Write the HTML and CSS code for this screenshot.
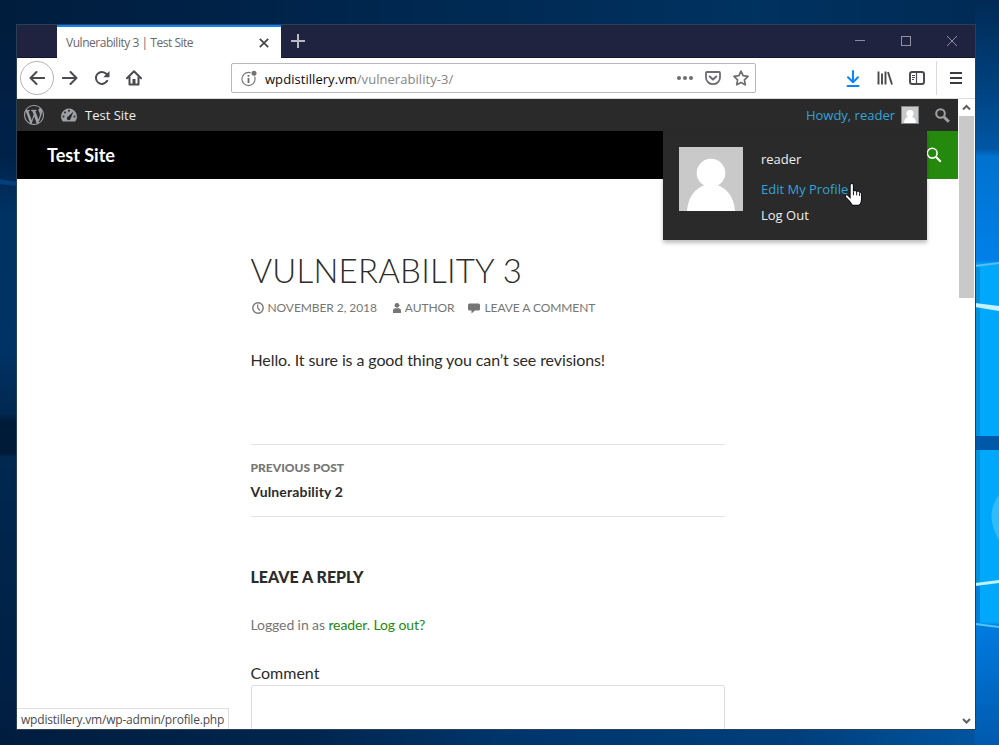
FILE: index.html
```html
<!DOCTYPE html>
<html lang="en">
<head>
<meta charset="utf-8">
<title>Vulnerability 3 | Test Site</title>
<link rel="stylesheet" href="styles.css">
</head>
<body>
<svg class="wallpaper" viewBox="0 0 999 745" preserveAspectRatio="none" aria-hidden="true">
  <defs>
    <linearGradient id="base" x1="0" x2="1" y1="0" y2="0"><stop offset="0" stop-color="#001d3d"/><stop offset=".3" stop-color="#00244b"/><stop offset=".75" stop-color="#003260"/><stop offset="1" stop-color="#002a54"/></linearGradient>
    <linearGradient id="left" x1="0" x2="0" y1="0" y2="1"><stop offset="0" stop-color="#001d3d"/><stop offset=".18" stop-color="#002249"/><stop offset=".26" stop-color="#003264"/><stop offset=".45" stop-color="#003365"/><stop offset=".54" stop-color="#002850"/><stop offset=".55" stop-color="#001b38"/><stop offset=".595" stop-color="#001b38"/><stop offset=".6" stop-color="#002850"/><stop offset="1" stop-color="#001e41"/></linearGradient>
    <linearGradient id="right" x1="0" x2="0" y1="0" y2="1"><stop offset="0" stop-color="#002a54"/><stop offset=".1" stop-color="#003e78"/><stop offset=".2" stop-color="#0057a5"/><stop offset=".21" stop-color="#0072cf"/><stop offset=".35" stop-color="#0080e8"/><stop offset=".355" stop-color="#00a8fb"/><stop offset=".835" stop-color="#00a8fb"/><stop offset=".84" stop-color="#007be0"/><stop offset="1" stop-color="#005aad"/></linearGradient>
    <linearGradient id="foot" x1="0" x2="1" y1="0" y2="0"><stop offset="0" stop-color="#001d3f"/><stop offset=".3" stop-color="#00254d"/><stop offset=".5" stop-color="#00356b"/><stop offset=".8" stop-color="#003f7c"/><stop offset="1" stop-color="#0058a5"/></linearGradient>
  </defs>
  <rect width="999" height="745" fill="url(#base)"/>
  <rect y="25" width="17" height="720" fill="url(#left)"/>
  <path d="M0 179L17 182V186L0 184Z" fill="#00407d"/>
  <rect y="729" width="999" height="16" fill="url(#foot)"/>
  <rect x="975" width="24" height="745" fill="url(#right)"/>
  <path d="M975 265L999 262V264L975 267Z" fill="#59bcf5"/>
  <rect x="975" y="267" width="5" height="316" fill="#0092dc"/>
  <path d="M975 303L999 306V311L975 307Z" fill="#c4f2ff"/>
  <rect x="975" y="436" width="24" height="14" fill="#0058a8"/>
  <path d="M999 495Q984 515 999 540Z" fill="#2fbcff"/>
  <path d="M975 583L999 580V583L975 586Z" fill="#bff2ff"/>
  <path d="M975 623L999 626V628L975 625Z" fill="#50c4fa"/>
  <path d="M975 586h5v37h-5z" fill="#0080d8"/>
</svg>

<div class="window">
  <header class="titlebar">
    <div class="tab">
      <span>Vulnerability 3 | Test Site</span>
      <svg width="10" height="10" viewBox="0 0 10 10"><path d="M.8.8l8.400 8.400M9.200.8L.8 9.200" stroke="#4a4a4f" stroke-width="1.800" fill="none"/></svg>
    </div>
    <svg class="newtab" width="14" height="14" viewBox="0 0 14 14"><path d="M7 0v14M0 7h14" stroke="#b9b9c6" stroke-width="2"/></svg>
    <div class="controls">
      <svg width="10" height="10" viewBox="0 0 10 10"><path d="M0 4.500h10" stroke="#8b8c9b"/></svg>
      <svg width="10" height="10" viewBox="0 0 10 10"><rect x=".5" y=".5" width="9" height="9" fill="none" stroke="#9192a0"/></svg>
      <svg width="10" height="10" viewBox="0 0 10 10"><path d="M0 0l10 10M10 0L0 10" stroke="#9192a0"/></svg>
    </div>
  </header>

  <div class="toolbar">
    <div class="nav">
      <span class="back"><svg width="16" height="16" viewBox="0 0 16 16"><path d="M15.200 8H1.500M7.500 2L1.500 8l6 6" fill="none" stroke="#4a4a4f" stroke-width="2" stroke-linecap="round" stroke-linejoin="round"/></svg></span>
      <svg width="16" height="16" viewBox="0 0 16 16"><path d="M.8 8h13.700M8.500 2l6 6-6 6" fill="none" stroke="#4a4a4f" stroke-width="2" stroke-linecap="round" stroke-linejoin="round"/></svg>
      <svg width="16" height="16" viewBox="0 0 16 16"><path d="M13.200 10.800A6 6 0 1 1 12.500 4" fill="none" stroke="#4a4a4f" stroke-width="2" stroke-linecap="round"/><path d="M15.500 1v6.200H9.300z" fill="#4a4a4f"/></svg>
      <svg width="16" height="16" viewBox="0 0 16 16"><path d="M1 8.200L8 1.300l7 6.900M3.500 7v7.500h9V7" fill="none" stroke="#4a4a4f" stroke-width="2" stroke-linecap="round" stroke-linejoin="round"/><path d="M6.500 9h3v6h-3z" fill="#4a4a4f"/></svg>
    </div>
    <div class="urlbar">
      <svg class="info" width="17" height="17" viewBox="0 0 17 17"><circle cx="7.500" cy="9" r="6.600" fill="none" stroke="#77777b" stroke-width="1.100"/><path d="M7.500 8v5M7.500 5v1.800" stroke="#6c6c70" stroke-width="1.800"/><circle cx="13" cy="3.200" r="3.400" fill="#fff"/><circle cx="13" cy="3.200" r="2.500" fill="#737377"/></svg>
      <span class="url">wpdistillery.vm<i>/vulnerability-3/</i></span>
      <svg width="16" height="16" viewBox="0 0 16 16"><g fill="#6d6d71"><circle cx="2" cy="8" r="2"/><circle cx="8" cy="8" r="2"/><circle cx="14" cy="8" r="2"/></g></svg>
      <svg width="16" height="16" viewBox="0 0 16 16"><path d="M2 2h12a1 1 0 0 1 1 1v4.500a7 6.700 0 0 1-14 0V3a1 1 0 0 1 1-1z" fill="none" stroke="#6d6d71" stroke-width="1.800"/><path d="M4.700 6.500L8 9.600l3.300-3.100" fill="none" stroke="#6d6d71" stroke-width="2" stroke-linecap="round" stroke-linejoin="round"/></svg>
      <svg width="16" height="16" viewBox="0 0 16 16"><path d="M8 1.200l2.100 4.500 4.900.7-3.600 3.400.9 5L8 12.400l-4.300 2.400.9-5L1 6.400l4.900-.7z" fill="none" stroke="#6d6d71" stroke-width="1.700" stroke-linejoin="round"/></svg>
    </div>
    <div class="tools">
      <svg width="14" height="17" viewBox="0 0 14 17"><path d="M7 1v11M2 7.300l5 5 5-5M1.500 16h11" fill="none" stroke="#0a84ff" stroke-width="2" stroke-linecap="round" stroke-linejoin="round"/></svg>
      <svg width="16" height="16" viewBox="0 0 16 16"><path d="M1.500 1.500v13M5 3.500v11M8.500 1.500v13" stroke="#4a4a4f" stroke-width="1.900"/><path d="M11 2l4 12.500" stroke="#4a4a4f" stroke-width="1.900"/></svg>
      <svg width="16" height="16" viewBox="0 0 16 16"><rect x="1" y="2" width="14" height="12" rx="2.200" fill="none" stroke="#4a4a4f" stroke-width="2"/><path d="M7.500 2v12" stroke="#4a4a4f" stroke-width="1.200"/><path d="M3 5.500h3M3 7.500h3M3 9.500h2" stroke="#4a4a4f"/></svg>
      <span class="divider"></span>
      <svg width="12" height="12" viewBox="0 0 12 12"><path d="M0 1h12M0 6h12M0 11h12" stroke="#3c3c40" stroke-width="2"/></svg>
    </div>
  </div>

  <div class="viewport">
    <div class="page">
      <div class="adminbar">
        <svg class="wp" width="20" height="20" viewBox="0 0 20 20"><path fill="#9da1a5" d="M20 10c0-5.510-4.490-10-10-10C4.480 0 0 4.490 0 10c0 5.520 4.480 10 10 10 5.510 0 10-4.480 10-10zM7.780 15.370L4.370 6.220c.55-.02 1.170-.08 1.170-.08.5-.06.44-1.130-.06-1.110 0 0-1.450.11-2.370.11-.18 0-.37 0-.58-.01C4.120 2.690 6.870 1.110 10 1.110c2.330 0 4.450.87 6.050 2.340-.68-.11-1.650.39-1.650 1.580 0 .74.45 1.360.9 2.100.35.61.55 1.360.55 2.460 0 1.490-1.400 5-1.400 5l-3.030-8.370c.54-.02.82-.17.82-.17.5-.05.44-1.250-.06-1.220 0 0-1.440.12-2.380.12-.87 0-2.330-.12-2.330-.12-.5-.03-.56 1.200-.06 1.220l.92.080 1.260 3.410zM17.410 10c.24-.64.74-1.870.43-4.250.7 1.290 1.050 2.710 1.050 4.250 0 3.290-1.730 6.240-4.400 7.780.97-2.590 1.940-5.200 2.920-7.780zM6.100 18.090C3.120 16.650 1.110 13.530 1.110 10c0-1.300.23-2.480.72-3.590C3.250 10.300 4.670 14.200 6.100 18.090zm4.030-6.630l2.580 6.980c-.86.29-1.760.45-2.710.45-.79 0-1.570-.11-2.290-.33.81-2.380 1.620-4.740 2.420-7.100z"/></svg>
        <svg class="dash" width="16" height="14" viewBox="0 0 16 14"><path d="M1.760 13.500h12.480A8 8 0 1 0 1.760 13.500z" fill="#9da1a5"/><g fill="#2a2a2a"><circle cx="8" cy="2.700" r="1"/><circle cx="4" cy="4.500" r="1"/><circle cx="2.500" cy="8.500" r="1"/><circle cx="13.500" cy="8.500" r="1"/><path d="M12.500 3.500L9.700 10.500a1.900 1.900 0 1 1-2.500-2z"/></g></svg>
        <span class="name">Test Site</span>
        <span class="howdy">Howdy, reader</span>
        <svg class="mini" viewBox="0 0 64 64"><rect width="64" height="64" fill="#c9c9c9"/><circle cx="32" cy="26" r="14.500" fill="#fff"/><path d="M8 64c1-16 10-26 24-26s23 10 24 26z" fill="#fff"/></svg>
        <svg class="find" width="15" height="15" viewBox="0 0 15 15"><circle cx="5.500" cy="5.500" r="4.300" fill="none" stroke="#9da1a5" stroke-width="2"/><path d="M9 9l4.800 4.800" stroke="#9da1a5" stroke-width="3"/></svg>
      </div>
      <div class="siteheader">
        <b>Test Site</b>
        <span class="toggle"><svg width="16" height="16" viewBox="0 0 16 16"><circle cx="6.200" cy="6.200" r="4.900" fill="none" stroke="#fff" stroke-width="1.600"/><path d="M9.800 9.800l5 5" stroke="#fff" stroke-width="2"/></svg></span>
      </div>

      <main>
        <h1>Vulnerability 3</h1>
        <div class="meta">
          <svg width="12" height="12" viewBox="0 0 12 12"><circle cx="6" cy="6" r="5.200" fill="none" stroke="#767676" stroke-width="1.400"/><path d="M5.700 2.500V6l2.300 2.500" fill="none" stroke="#767676" stroke-width="1.200"/></svg>
          <span class="date">November 2, 2018</span>
          <svg width="8" height="12" viewBox="0 0 8 12"><circle cx="4" cy="3.300" r="2.400" fill="#767676"/><path d="M0 11V9q0-2.700 2.500-2.700h3Q8 6.300 8 9v2z" fill="#767676"/></svg>
          <span class="author">author</span>
          <svg width="12" height="12" viewBox="0 0 12 12"><path d="M1.500 1.500h9Q12 1.500 12 3v4q0 1.500-1.500 1.500H7L3.500 11.500v-3h-2Q0 8.500 0 7V3q0-1.500 1.500-1.500z" fill="#767676"/></svg>
          <span class="reply">Leave a comment</span>
        </div>
        <p class="body">Hello. It sure is a good thing you can’t see revisions!</p>
        <nav class="postnav">
          <div class="label">Previous Post</div>
          <div class="prev">Vulnerability 2</div>
        </nav>
        <h3>Leave a Reply</h3>
        <p class="logged">Logged in as <a>reader</a>. <a>Log out?</a></p>
        <label>Comment</label>
        <div class="textarea"></div>
      </main>
    </div>
    <div class="scrollbar">
      <svg width="17" height="17" viewBox="0 0 17 17"><path d="M5 10.500L8.500 7l3.500 3.500" fill="none" stroke="#606060" stroke-width="2"/></svg>
      <div class="thumb"></div>
      <svg class="down" width="17" height="17" viewBox="0 0 17 17"><path d="M5 7l3.500 3.500L12 7" fill="none" stroke="#606060" stroke-width="2"/></svg>
    </div>
    <div class="usermenu">
      <svg width="64" height="64" viewBox="0 0 64 64"><rect width="64" height="64" fill="#c9c9c9"/><circle cx="32" cy="26" r="14.300" fill="#fff"/><path d="M8 64C9 49 17 41 26 38h12c9 3 17 11 18 26z" fill="#fff"/></svg>
      <div class="links"><span>reader</span><span class="hover">Edit My Profile</span><span>Log Out</span></div>
    </div>
    <div class="status">wpdistillery.vm/wp-admin/profile.php</div>
  </div>
</div>

<svg class="cursor" width="18" height="24" viewBox="0 0 16.2 21.600"><path d="M5.500 14V3q0-1.800 1.500-1.800T8.500 3v5.500q.2-1 1.400-1t1.500 1.300q.3-.8 1.300-.7t1.400 1.300q.3-.5 .8-.3 .9.3.9 1.900v5q0 3-2.300 5H7.500Q6 17.800 1.800 14q-1.300-1.400-.3-2.200 1-.7 2.300.4z" fill="#fff" stroke="#10131f" stroke-width="1"/><path d="M8.500 8.500V12M11.400 9.200V12M14 10.200V12.500" stroke="#10131f" stroke-width=".9"/></svg>
</body>
</html>
```
FILE: styles.css
```css
* { box-sizing: border-box; }
body {
  margin: 0;
  width: 999px;
  height: 745px;
  padding: 24px 23px 15px 16px;
  overflow: hidden;
  position: relative;
  background: #002249;
  font-family: "Open Sans", "Noto Sans", sans-serif;
}
svg { display: block; flex: none; }
h1, h3, p { margin: 0; }
.wallpaper { position: absolute; inset: 0; width: 999px; height: 745px; }
.window {
  position: relative;
  width: 960px;
  height: 706px;
  border: 1px solid #2b4053;
  display: flex;
  flex-direction: column;
  background: #fff;
}

.titlebar {
  height: 33px;
  flex: none;
  display: flex;
  align-items: center;
  background: #202340;
  border-bottom: 1px solid #14152e;
  padding-left: 40px;
}
.tab {
  width: 224px;
  height: 33px;
  margin-top: 1px;
  border-top: 2px solid #0a84ff;
  background: #fff;
  padding: 0 12px 0 9px;
  display: flex;
  align-items: center;
  justify-content: space-between;
  font-size: 12px;
  letter-spacing: -.47px;
  color: #67676c;
}
.newtab { margin-left: 10px; }
.controls { margin-left: auto; display: flex; gap: 36px; padding-right: 18px; }

.toolbar {
  height: 41px;
  flex: none;
  display: flex;
  align-items: center;
  border-bottom: 1px solid #dcdcdc;
  background: #fff;
}
.nav { display: flex; align-items: center; gap: 16px; padding-left: 3px; width: 214px; }
.back {
  width: 34px;
  height: 34px;
  margin-right: -8px;
  border: 1px solid #b4b4b6;
  border-radius: 50%;
  display: grid;
  place-items: center;
}
.urlbar {
  width: 525px;
  height: 30px;
  border: 1px solid #b9b9bb;
  border-radius: 2px;
  display: flex;
  align-items: center;
  gap: 12px;
  padding: 0 6px 0 9px;
}
.info { margin-right: -5px; }
.url { flex: 1; padding-top: 2px; font-size: 13px; letter-spacing: .05px; color: #0c0c0d; white-space: nowrap; }
.url i { font-style: normal; color: #85858a; }
.tools { margin-left: auto; display: flex; align-items: center; gap: 16px; padding-right: 13px; }
.tools svg:first-child { margin-right: 1px; }
.divider { width: 1px; height: 34px; background: #d9d9dd; margin: 0 -3px 0 -5px; }

.viewport { flex: 1; display: flex; position: relative; min-height: 0; overflow: hidden; }
.page { width: 941px; overflow: hidden; }
.adminbar {
  height: 32px;
  display: flex;
  align-items: center;
  background: #2a2a2a;
  color: #eee;
  font-size: 13px;
  padding: 0 8px 0 7px;
}
.dash { margin-left: 17px; }
.name { margin-left: 8px; }
.howdy { margin-left: auto; color: #33a3d6; }
.mini { width: 18px; height: 18px; border: 1px solid #82878c; margin-left: 6px; }
.find { margin-left: 16px; }
.siteheader {
  height: 48px;
  background: #000;
  color: #fff;
  display: flex;
  align-items: center;
  justify-content: space-between;
  padding-left: 30px;
  font: 18px/48px Lato, sans-serif;
}
.toggle { width: 48px; height: 48px; background: #24890d; display: grid; place-items: center; }

main {
  width: 474px;
  margin-left: 233.500px;
  padding-top: 73px;
  font: 16px/24px Lato, sans-serif;
  color: #2b2b2b;
}
h1 { font-size: 33px; line-height: 36px; font-weight: 300; letter-spacing: .22px; text-transform: uppercase; }
.meta {
  margin-top: 12px;
  height: 16px;
  display: flex;
  align-items: center;
  font-size: 12px;
  line-height: 16px;
  letter-spacing: -.08px;
  text-transform: uppercase;
  color: #767676;
  white-space: nowrap;
  padding-left: 1px;
}
.date { margin: 0 16px 0 4px; }
.author { margin: 0 14px 0 4px; }
.reply { margin-left: 4px; }
.body { margin-top: 32px; white-space: nowrap; letter-spacing: -.1px; }
.postnav {
  margin-top: 72px;
  padding: 13px 0 12px;
  border-top: 1px solid #e2e2e2;
  border-bottom: 1px solid #e2e2e2;
}
.label { font-size: 12px; line-height: 20px; font-weight: 900; text-transform: uppercase; color: #767676; }
.prev { margin-top: 2px; font-size: 14px; font-weight: 700; letter-spacing: .15px; }
h3 { margin-top: 48px; font-size: 16px; line-height: 24px; font-weight: 900; text-transform: uppercase; }
.logged { margin-top: 24px; font-size: 14px; letter-spacing: -.1px; color: #767676; }
.logged a { color: #24890d; }
label { display: block; margin-top: 24px; }
.textarea { height: 100px; border: 1px solid #dedede; border-radius: 2px; }

.scrollbar { width: 17px; background: #fff; display: flex; flex-direction: column; }
.thumb { width: 15px; height: 182px; margin-left: 1px; background: #c9c9c9; }
.down { margin-top: auto; }

.usermenu {
  position: absolute;
  left: 646px;
  top: 32px;
  width: 264px;
  height: 109px;
  padding: 16px;
  display: flex;
  gap: 18px;
  background: #2a2a2a;
  box-shadow: 0 3px 4px rgba(0, 0, 0, .25);
}
.links { display: flex; flex-direction: column; font-size: 13px; line-height: 26px; color: #eee; white-space: nowrap; }
.links span:first-child { margin: -1px 0 4px; }
.links .hover { color: #33a3d6; }
.status {
  position: absolute;
  left: 0;
  bottom: 0;
  width: 212px;
  height: 21px;
  padding-left: 4px;
  background: #fff;
  border: 1px solid #dedede;
  border-width: 1px 1px 0 0;
  font-size: 12px;
  line-height: 21px;
  letter-spacing: -.2px;
  color: #4a4a4f;
  white-space: nowrap;
}
.cursor { position: absolute; left: 844px; top: 182px; }
```
